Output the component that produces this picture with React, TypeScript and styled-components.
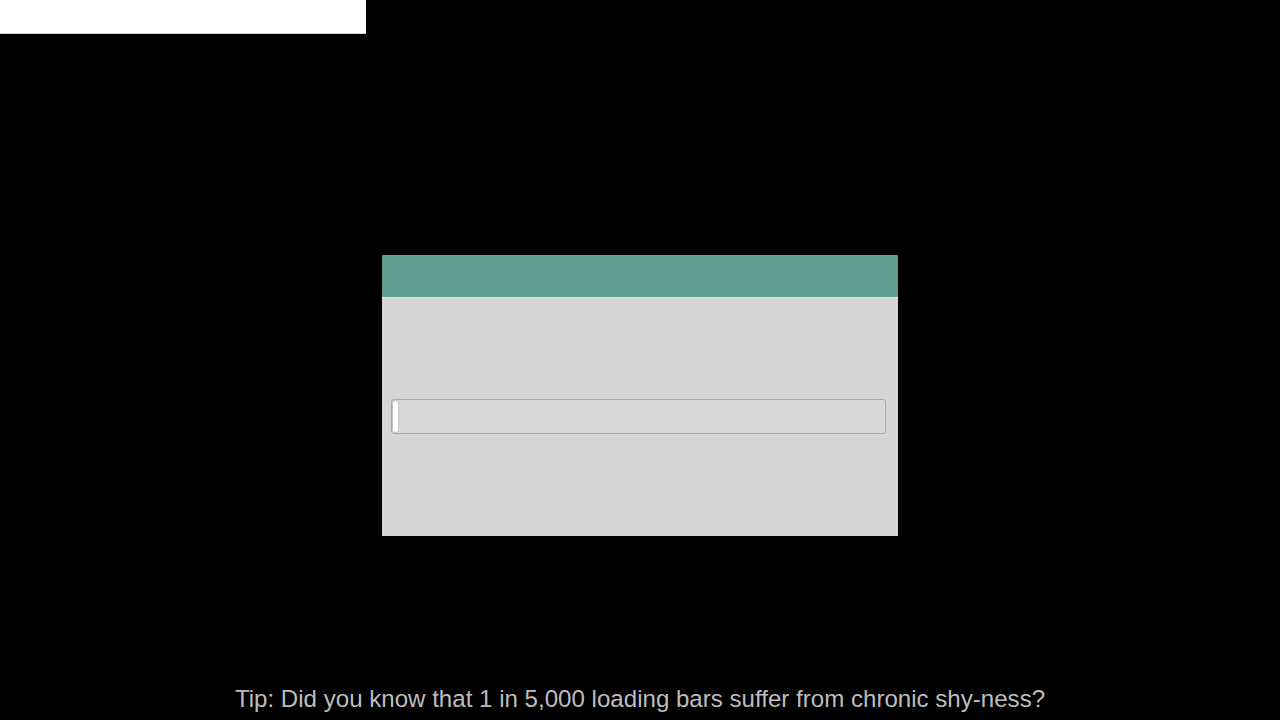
import React from "react";
import styled, { createGlobalStyle } from "styled-components";

const Global = createGlobalStyle`
  html, body { margin: 0; padding: 0; background: #000; }
  body { font-family: "Liberation Sans", Arial, sans-serif; }
  #root { height: 720px; }
`;

const Screen = styled.div`
  height: 720px;
  display: flex;
  flex-direction: column;
  background: #000;
  overflow: hidden;
`;

const TopBar = styled.div`
  width: 366px;
  height: 34px;
  background: #fff;
  border-bottom: 1px solid #cfcfcf;
  box-sizing: border-box;
`;

const Stage = styled.div`
  display: flex;
  justify-content: center;
  padding-top: 221px;
`;

const Dialog = styled.div`
  width: 516px;
  height: 281px;
  display: flex;
  flex-direction: column;
  background: #d6d6d6;
`;

const Header = styled.div`
  height: 42px;
  background: #5f9e90;
  border-bottom: 1px solid #e6e6e6;
`;

const Body = styled.div`
  flex: 1;
  display: flex;
  align-items: flex-start;
  padding: 101px 12px 0 9px;
`;

const Track = styled.div`
  flex: 1;
  height: 35px;
  box-sizing: border-box;
  border: 1px solid #a9a9a9;
  border-radius: 3px;
  background: #d8d8d8;
  display: flex;
  padding: 1px 0 1px 1px;
`;

const Fill = styled.div`
  border-radius: 3px;
  background: #fff;
  box-shadow: 0 0 0 1px #c4c4c4;
`;

const Tip = styled.div`
  margin-top: auto;
  padding-bottom: 7px;
  text-align: center;
  color: #bdbdbd;
  font-size: 24.1px;
  line-height: 28px;
`;

export default function App() {
  const progress = 1;
  return (
    <>
      <Global />
      <Screen>
        <TopBar />
        <Stage>
          <Dialog>
            <Header />
            <Body>
              <Track>
                <Fill style={{ width: `${progress}%`, minWidth: 5 }} />
              </Track>
            </Body>
          </Dialog>
        </Stage>
        <Tip>Tip: Did you know that 1 in 5,000 loading bars suffer from chronic shy-ness?</Tip>
      </Screen>
    </>
  );
}
